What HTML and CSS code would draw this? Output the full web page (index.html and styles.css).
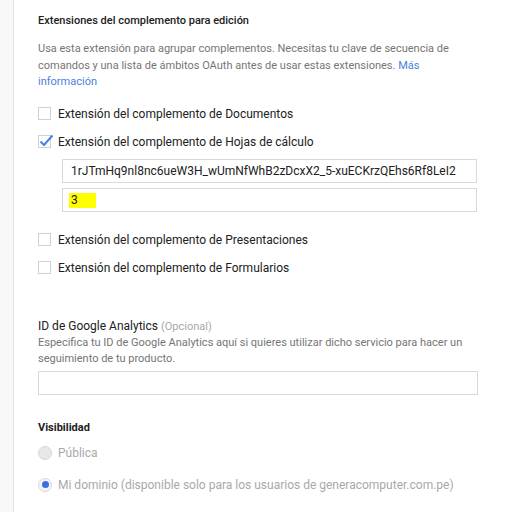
FILE: index.html
```html
<!DOCTYPE html>
<html lang="es">
<head>
<meta charset="utf-8">
<link rel="stylesheet" href="styles.css">
</head>
<body>
<div class="page">
  <div class="rail"></div>
  <main class="content">
    <h2 class="title">Extensiones del complemento para edición</h2>
    <p class="desc">Usa esta extensión para agrupar complementos. Necesitas tu clave de secuencia de comandos y una lista de ámbitos OAuth antes de usar estas extensiones. <a class="link">Más información</a></p>

    <div class="checks">
      <label class="check"><span class="box"></span><span>Extensión del complemento de Documentos</span></label>
      <label class="check"><span class="box checked"><svg viewBox="0 0 16 16" width="16" height="16"><path d="M2.5 8.5 L6 12 L14.5 2.5" fill="none" stroke="#4a7ee6" stroke-width="2"/></svg></span><span>Extensión del complemento de Hojas de cálculo</span></label>
      <div class="sub">
        <div class="field">1rJTmHq9nl8nc6ueW3H_wUmNfWhB2zDcxX2_5-xuECKrzQEhs6Rf8LeI2</div>
        <div class="field"><span class="hl">3</span></div>
      </div>
      <label class="check"><span class="box"></span><span>Extensión del complemento de Presentaciones</span></label>
      <label class="check"><span class="box"></span><span>Extensión del complemento de Formularios</span></label>
    </div>

    <div class="ga">
      <div class="ga-label">ID de Google Analytics <span class="opt">(Opcional)</span></div>
      <p class="ga-desc">Especifica tu ID de Google Analytics aquí si quieres utilizar dicho servicio para hacer un seguimiento de tu producto.</p>
      <div class="field wide"></div>
    </div>

    <h3 class="vis">Visibilidad</h3>
    <div class="radios">
      <label class="radio"><span class="dot"></span><span>Pública</span></label>
      <label class="radio"><span class="dot on"></span><span>Mi dominio (disponible solo para los usuarios de generacomputer.com.pe)</span></label>
    </div>
  </main>
</div>
</body>
</html>
```
FILE: styles.css
```css
* { box-sizing: border-box; }
html, body { margin: 0; padding: 0; background: #fff; }
body { font-family: Roboto, "Noto Sans", Arial, sans-serif; color: #212121; }
.page { display: flex; min-height: 512px; }
.rail { width: 14px; flex: none; background: #f8f8f8; border-right: 1px solid #e3e3e3; }
.content { flex: 1; padding-left: 24px; padding-top: 13px; }
.title { margin: 0; font-size: 11px; font-weight: 500; line-height: 16px; color: #212121; }
.desc { margin: 12px 0 0; width: 420px; font-size: 11px; line-height: 16.5px; color: #757575; }
.link { color: #4a7fe0; }
.checks { margin-top: 9px; display: flex; flex-direction: column; }
.check { display: flex; align-items: center; height: 28px; font-size: 12px; color: #212121; gap: 7px; }
.box { width: 13px; height: 13px; border: 1px solid #d0d0d0; background: #fff; position: relative; flex: none; }
.box.checked svg { position: absolute; left: -1px; top: -3px; }
.sub { padding-left: 24px; padding-top: 3px; padding-bottom: 14px; display: flex; flex-direction: column; gap: 5px; }
.field { width: 415px; height: 24px; border: 1px solid #d9d9d9; font-size: 12px; line-height: 22px; padding-left: 8px; color: #212121; white-space: nowrap; overflow: hidden; }
.hl { display: inline-block; background: #ffff00; padding: 0 18px 0 2px; margin-left: -2px; line-height: 15px; vertical-align: middle; font-size: 12px; }
.ga { margin-top: 36px; }
.ga-label { font-size: 12px; line-height: 16px; color: #212121; }
.opt { font-size: 11px; color: #a8a8a8; }
.ga-desc { margin: 0; width: 440px; font-size: 11px; line-height: 16.5px; color: #757575; }
.field.wide { width: 440px; height: 24px; margin-top: 3px; }
.vis { margin: 25px 0 0; font-size: 11px; font-weight: 700; line-height: 16px; color: #212121; }
.radios { margin-top: 10px; display: flex; flex-direction: column; gap: 18px; }
.radio { display: flex; align-items: center; gap: 6px; font-size: 12px; color: #a9a9a9; height: 14px; }
.dot { width: 14px; height: 14px; border-radius: 50%; border: 1px solid #d6d6d6; background: #e8e8e8; position: relative; flex: none; }
.dot.on { background: #f5f5f5; }
.dot.on::after { content: ""; position: absolute; left: 2.5px; top: 2.5px; width: 7px; height: 7px; border-radius: 50%; background: #3d6fe0; }
```
